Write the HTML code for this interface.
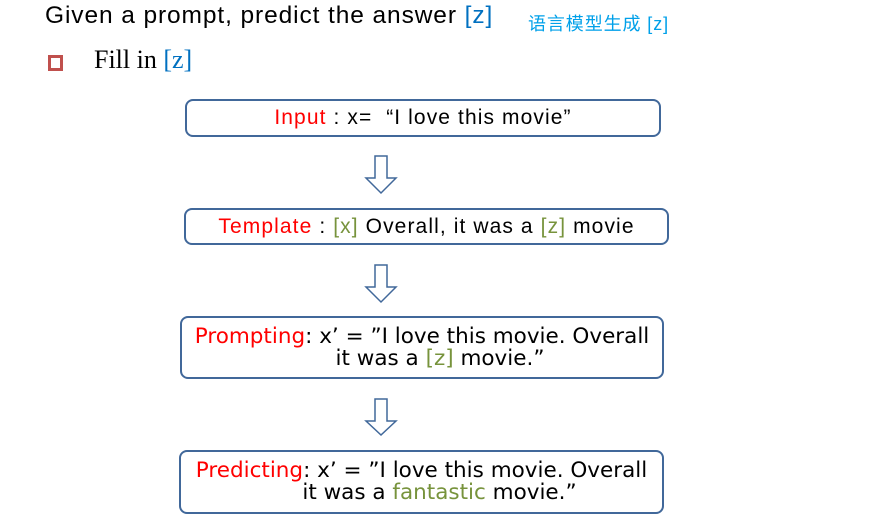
<!DOCTYPE html>
<html><head><style>
body{margin:0;width:891px;height:522px;background:#fff;position:relative;overflow:hidden;font-family:"Liberation Sans","DejaVu Sans",sans-serif;}
.a{position:absolute;white-space:nowrap}
.box{position:absolute;border:2px solid #41689a;border-radius:8px;box-sizing:border-box;text-align:center;color:#000;display:flex;flex-direction:column;justify-content:center}
.c{font-size:21px;letter-spacing:1.1px;line-height:22px}
.v{font-family:"DejaVu Sans",sans-serif;font-size:21.5px;line-height:22px;white-space:nowrap}
.l2{position:relative;left:18px}
.r{color:#ff0000}.g{color:#77933c}.b{color:#0070c0}
svg{position:absolute}
</style></head><body>
<div class="a" style="left:45px;top:2px;font-size:24.5px;letter-spacing:0.9px;color:#000">Given a prompt, predict the answer <span class="b">[z]</span></div>
<div class="a" style="left:528px;top:10px;font-size:18px;letter-spacing:0.9px;color:#00a0e9;font-family:'Liberation Sans','Noto Sans CJK SC',sans-serif">语言模型生成 [z]</div>
<div class="a" style="left:48px;top:55px;width:9px;height:10px;border:3px solid #c0504d"></div>
<div class="a" style="left:94px;top:45px;font-size:26px;font-family:'Liberation Serif',serif;color:#000">Fill in <span class="b">[z]</span></div>

<div class="box c" style="left:185px;top:99px;width:476px;height:38px"><div><span class="r">Input</span> : x=&nbsp; “I love this movie”</div></div>
<div class="box c" style="left:184px;top:208px;width:485px;height:37px"><div><span class="r">Template</span> : <span class="g">[x]</span> Overall, it was a <span class="g">[z]</span> movie</div></div>
<div class="box" style="left:180px;top:316px;width:484px;height:63px"><div class="v"><span class="r">Prompting</span>: x’ = ”I love this movie. Overall<br><span class="l2">it was a <span class="g">[z]</span> movie.”</span></div></div>
<div class="box" style="left:179px;top:450px;width:485px;height:64px"><div class="v"><span class="r">Predicting</span>: x’ = ”I love this movie. Overall<br><span class="l2">it was a <span class="g">fantastic</span> movie.”</span></div></div>

<svg width="891" height="522" style="left:0;top:0">
<g fill="#fff" stroke="#41689a" stroke-width="1.5">
<path d="M375 156 H387 V178 H396 L381 193 L366 178 H375 Z"/>
<path d="M375 265 H387 V287 H396 L381 302 L366 287 H375 Z"/>
<path d="M375 399 H387 V421 H396 L381 435 L366 421 H375 Z"/>
</g></svg>
</body></html>
